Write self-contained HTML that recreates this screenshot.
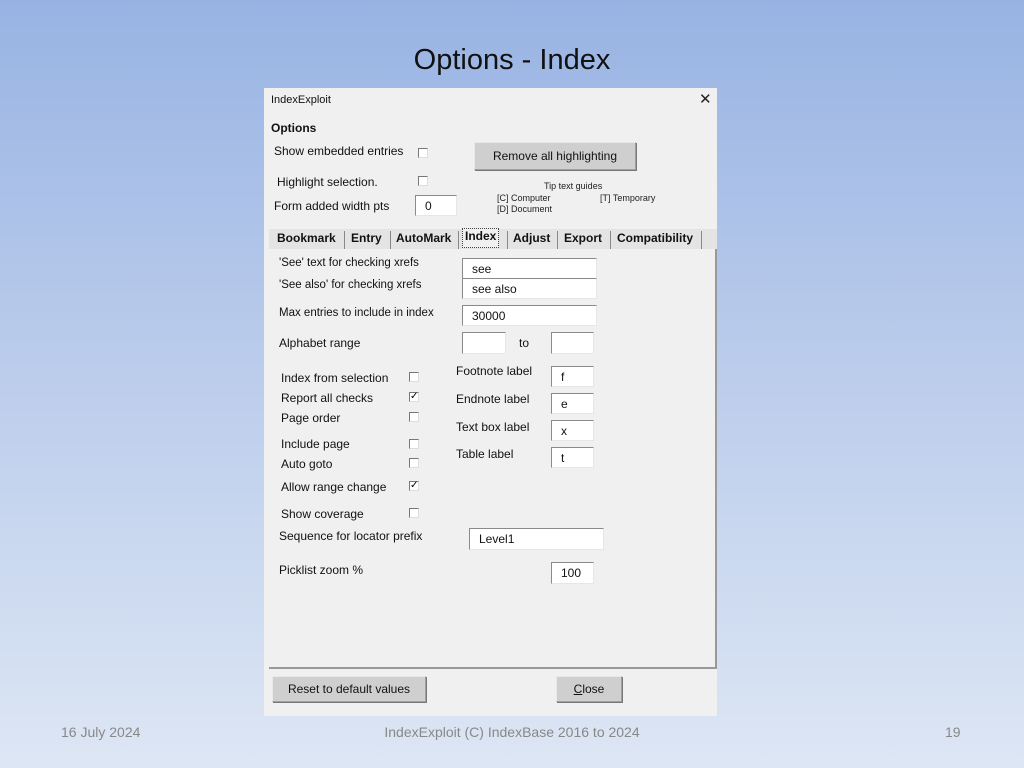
<!DOCTYPE html>
<html><head><meta charset="utf-8"><style>
*{margin:0;padding:0;box-sizing:border-box}
body{width:1024px;height:768px;overflow:hidden;position:relative;background:linear-gradient(180deg,#98b3e3 0%,#b9cbeb 45%,#dde6f4 100%);font-family:"Liberation Sans",sans-serif}
.a{position:absolute;white-space:nowrap}
.t{font-size:12px;color:#111}
.dlg{position:absolute;left:264px;top:88px;width:453px;height:628px;background:#f0f0f0}
.box{position:absolute;background:#fff;border-top:1px solid #8a8a8a;border-left:1px solid #8a8a8a;border-right:1px solid #e6e6e6;border-bottom:1px solid #e6e6e6;font-size:12px;padding:3px 0 0 9px;color:#111}
.cb{position:absolute;width:10px;height:10px;border-top:1px solid #777;border-left:1px solid #777;border-right:1px solid #ddd;border-bottom:1px solid #ddd;background:#fff;font-size:10px;line-height:8px;text-align:center}
.btn{position:absolute;background:#cfcfcf;border:1px solid #a0a0a0;border-top-color:#e8e8e8;border-left-color:#e8e8e8;box-shadow:1px 1px 0 #777;font-size:12px;text-align:center;color:#111}
.tab{position:absolute;top:143px;font-size:12px;font-weight:bold;color:#111}
.sep{position:absolute;top:143px;width:1px;height:18px;background:#888}
</style></head><body>
<div class="a" style="left:0;width:1024px;top:44px;text-align:center;font-size:29px;color:#111">Options - Index</div>
<div class="dlg">
<div class="a t" style="left:7px;top:6px;font-size:11px">IndexExploit</div>
<div class="a" style="left:435px;top:2px;font-size:15px;color:#222">✕</div>
<div class="a t" style="left:7px;top:33px;font-weight:bold">Options</div>
<div class="a t" style="left:10px;top:56px">Show embedded entries</div>
<div class="cb" style="left:154px;top:60px"></div>
<div class="btn" style="left:210px;top:54px;width:162px;height:28px;line-height:26px">Remove all highlighting</div>
<div class="a t" style="left:13px;top:87px">Highlight selection.</div>
<div class="cb" style="left:154px;top:88px"></div>
<div class="a t" style="left:10px;top:111px">Form added width pts</div>
<div class="box" style="left:151px;top:107px;width:42px;height:21px">0</div>
<div class="a" style="left:280px;top:93px;font-size:9px;color:#222">Tip text guides</div>
<div class="a" style="left:233px;top:105px;font-size:9px;color:#222">[C] Computer</div>
<div class="a" style="left:336px;top:105px;font-size:9px;color:#222">[T] Temporary</div>
<div class="a" style="left:233px;top:116px;font-size:9px;color:#222">[D] Document</div>
<div class="a" style="left:5px;top:141px;width:448px;height:21px;background:#e4e4e4"></div>
<div class="tab" style="left:13px">Bookmark</div><div class="sep" style="left:80px"></div>
<div class="tab" style="left:87px">Entry</div><div class="sep" style="left:126px"></div>
<div class="tab" style="left:132px">AutoMark</div><div class="sep" style="left:194px"></div>
<div class="tab" style="left:198px;top:140px;border:1px dotted #444;padding:0 2px;height:20px;background:#f0f0f0">Index</div><div class="sep" style="left:243px"></div>
<div class="tab" style="left:249px">Adjust</div><div class="sep" style="left:293px"></div>
<div class="tab" style="left:300px">Export</div><div class="sep" style="left:346px"></div>
<div class="tab" style="left:353px">Compatibility</div><div class="sep" style="left:437px"></div>
<div class="a" style="left:5px;top:161px;width:448px;height:420px;background:#f0f0f0;border-right:2px solid #999;border-bottom:2px solid #999"></div>
<div class="a t" style="left:15px;top:169px;font-size:11.5px">'See' text for checking xrefs</div>
<div class="box" style="left:198px;top:170px;width:135px;height:21px">see</div>
<div class="a t" style="left:15px;top:191px;font-size:11.5px">'See also' for checking xrefs</div>
<div class="box" style="left:198px;top:190px;width:135px;height:21px">see also</div>
<div class="a t" style="left:15px;top:219px;font-size:11.5px">Max entries to include in index</div>
<div class="box" style="left:198px;top:217px;width:135px;height:21px">30000</div>
<div class="a t" style="left:15px;top:248px">Alphabet range</div>
<div class="box" style="left:198px;top:244px;width:44px;height:22px"></div>
<div class="a t" style="left:255px;top:248px">to</div>
<div class="box" style="left:287px;top:244px;width:43px;height:22px"></div>
<div class="a t" style="left:17px;top:283px">Index from selection</div><div class="cb" style="left:145px;top:284px"></div>
<div class="a t" style="left:17px;top:303px">Report all checks</div><div class="cb" style="left:145px;top:304px">✓</div>
<div class="a t" style="left:17px;top:323px">Page order</div><div class="cb" style="left:145px;top:324px"></div>
<div class="a t" style="left:17px;top:349px">Include page</div><div class="cb" style="left:145px;top:351px"></div>
<div class="a t" style="left:17px;top:369px">Auto goto</div><div class="cb" style="left:145px;top:370px"></div>
<div class="a t" style="left:17px;top:392px">Allow range change</div><div class="cb" style="left:145px;top:393px">✓</div>
<div class="a t" style="left:17px;top:419px">Show coverage</div><div class="cb" style="left:145px;top:420px"></div>
<div class="a t" style="left:192px;top:276px">Footnote label</div><div class="box" style="left:287px;top:278px;width:43px;height:21px">f</div>
<div class="a t" style="left:192px;top:304px">Endnote label</div><div class="box" style="left:287px;top:305px;width:43px;height:21px">e</div>
<div class="a t" style="left:192px;top:332px">Text box label</div><div class="box" style="left:287px;top:332px;width:43px;height:21px">x</div>
<div class="a t" style="left:192px;top:359px">Table label</div><div class="box" style="left:287px;top:359px;width:43px;height:21px">t</div>
<div class="a t" style="left:15px;top:441px">Sequence for locator prefix</div>
<div class="box" style="left:205px;top:440px;width:135px;height:22px">Level1</div>
<div class="a t" style="left:15px;top:475px">Picklist zoom %</div>
<div class="box" style="left:287px;top:474px;width:43px;height:22px">100</div>
<div class="btn" style="left:8px;top:588px;width:154px;height:26px;line-height:24px">Reset to default values</div>
<div class="btn" style="left:292px;top:588px;width:66px;height:26px;line-height:24px"><u>C</u>lose</div>
</div>
<div class="a" style="left:61px;top:724px;font-size:14px;color:#888">16 July 2024</div>
<div class="a" style="left:0;width:1024px;text-align:center;top:724px;font-size:14px;color:#888">IndexExploit (C) IndexBase 2016 to 2024</div>
<div class="a" style="left:945px;top:724px;font-size:14px;color:#888">19</div>
</body></html>
